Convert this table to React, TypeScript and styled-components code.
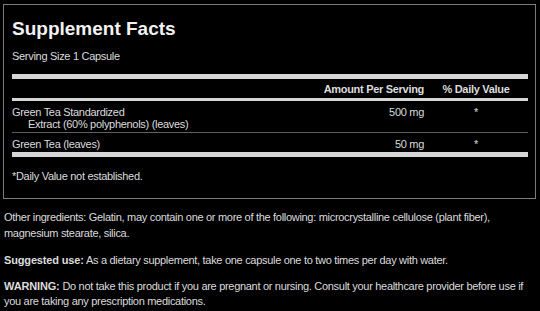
import React from 'react'
import styled, { createGlobalStyle } from 'styled-components'

const colors = {
	background: '#000000',
	text: '#dcdcdc',
	title: '#f2f2f2',
	bar: '#d6d6d6',
	border: '#7c7c7c',
	rule: '#5e5e5e',
}

type TIngredient = {
	name: string
	detail?: string
	amount: string
	daily: string
}

const ingredients: TIngredient[] = [
	{
		name: 'Green Tea Standardized',
		detail: 'Extract (60% polyphenols) (leaves)',
		amount: '500 mg',
		daily: '*',
	},
	{ name: 'Green Tea (leaves)', amount: '50 mg', daily: '*' },
]

function App() {
	return (
		<>
			<GlobalStyle />
			<FactsPanel>
				<Title>Supplement Facts</Title>
				<Serving>Serving Size 1 Capsule</Serving>
				<Bar $height={5} $gap={11} />
				<HeaderRow>
					<span />
					<HeadCell $align="right">Amount Per Serving</HeadCell>
					<HeadCell $align="center">% Daily Value</HeadCell>
				</HeaderRow>
				<Bar $height={3} $gap={2} />
				{ingredients.map((item, i) => (
					<React.Fragment key={item.name}>
						{i > 0 && <Rule />}
						<IngredientRow>
							<Name>
								{item.name}
								{item.detail && <Detail>{item.detail}</Detail>}
							</Name>
							<Cell $align="right">{item.amount}</Cell>
							<Cell $align="center">{item.daily}</Cell>
						</IngredientRow>
					</React.Fragment>
				))}
				<Bar $height={5} $gap={2} />
				<Footnote>*Daily Value not established.</Footnote>
			</FactsPanel>
			<Notes>
				<Note $lineHeight={16}>
					Other ingredients: Gelatin, may contain one or more of the following: microcrystalline cellulose
					(plant fiber), magnesium stearate, silica.
				</Note>
				<Note $lineHeight={16}>
					<strong>Suggested use:</strong> As a dietary supplement, take one capsule one to two times per day
					with water.
				</Note>
				<Note $lineHeight={15}>
					<strong>WARNING:</strong> Do not take this product if you are pregnant or nursing. Consult your
					healthcare provider before use if you are taking any prescription medications.
				</Note>
			</Notes>
		</>
	)
}

export default App

const GlobalStyle = createGlobalStyle`
	html, body {
		margin: 0;
		background: ${colors.background};
	}
	body {
		font-family: 'Liberation Sans', Arial, sans-serif;
		font-size: 11px;
		letter-spacing: -0.3px;
		color: ${colors.text};
	}
	strong {
		letter-spacing: -0.15px;
	}
`

const FactsPanel = styled.section`
	box-sizing: border-box;
	width: 533px;
	height: 195px;
	margin: 4px 0 0 3px;
	padding: 13px 7px 0 8px;
	border: 1px solid ${colors.border};
	display: flex;
	flex-direction: column;
`
const Title = styled.h1`
	margin: 0;
	font-size: 19px;
	line-height: 22px;
	font-weight: bold;
	letter-spacing: 0;
	color: ${colors.title};
`
const Serving = styled.div`
	margin-top: 10px;
	line-height: 13px;
`
const Bar = styled.div<{ $height: number; $gap: number }>`
	height: ${p => p.$height}px;
	margin-top: ${p => p.$gap}px;
	background: ${colors.bar};
	flex-shrink: 0;
`
const Rule = styled.div`
	height: 1px;
	margin-top: 2px;
	background: ${colors.rule};
`
const Columns = styled.div`
	display: grid;
	grid-template-columns: 1fr 110px 104px;
`
const HeaderRow = styled(Columns)`
	margin-top: 4px;
	line-height: 13px;
`
const HeadCell = styled.div<{ $align: 'right' | 'center' }>`
	font-weight: bold;
	text-align: ${p => p.$align};
`
const IngredientRow = styled(Columns)`
	margin-top: 5px;
	line-height: 12px;
`
const Name = styled.div`
	display: flex;
	flex-direction: column;
`
const Detail = styled.span`
	padding-left: 16px;
`
const Cell = styled.div<{ $align: 'right' | 'center' }>`
	text-align: ${p => p.$align};
`
const Footnote = styled.div`
	margin-top: 13px;
	line-height: 13px;
`
const Notes = styled.div`
	padding: 0 4px;
`
const Note = styled.p<{ $lineHeight: number }>`
	margin: 10px 0 0;
	line-height: ${p => p.$lineHeight}px;

	& + & {
		margin-top: 11px;
	}
`
